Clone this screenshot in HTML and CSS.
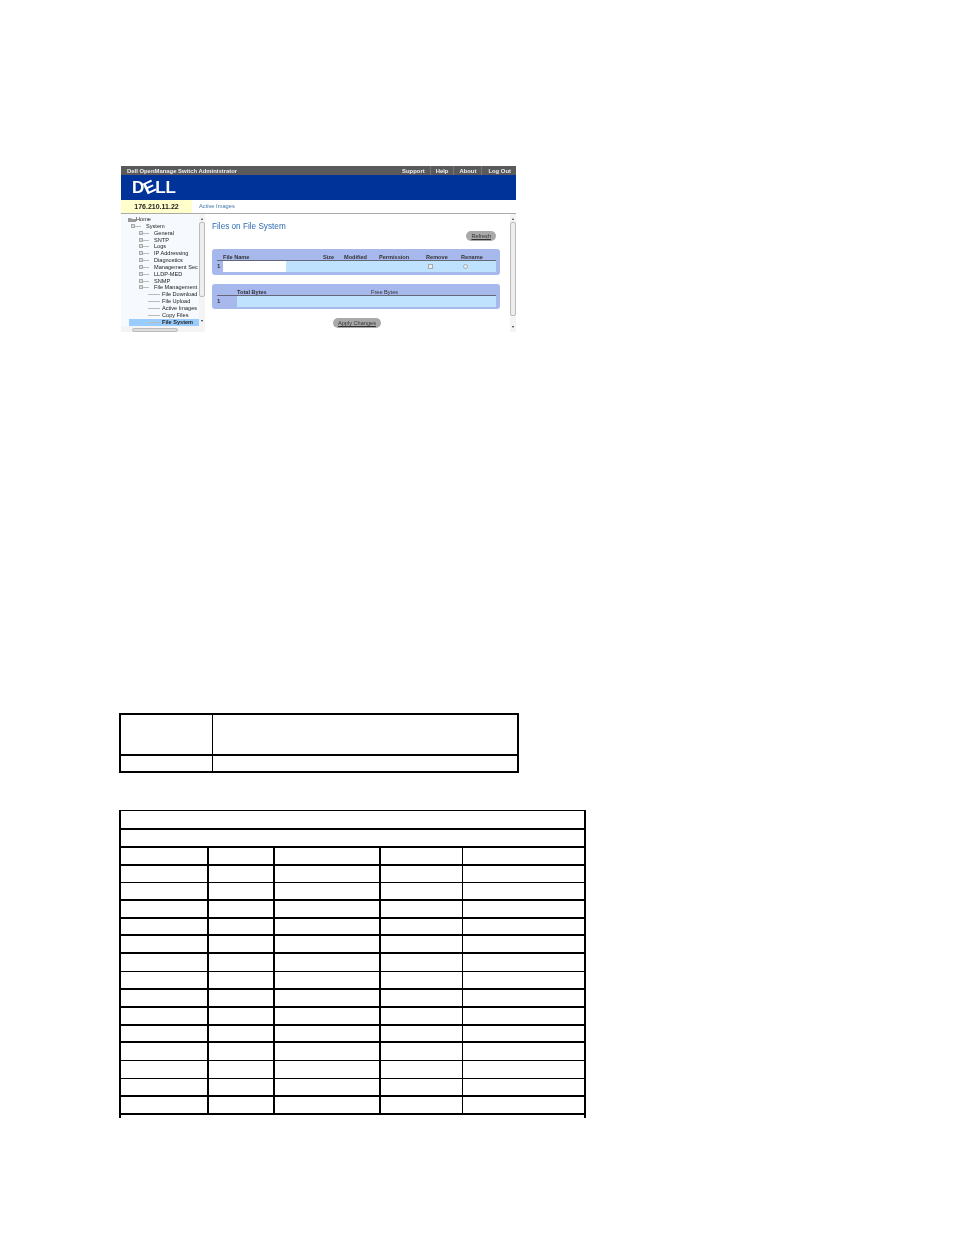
FILE: index.html
```html
<!DOCTYPE html>
<html lang="en">
<head>
    <meta charset="UTF-8">
    <title>Files on File System</title>
    <link rel="stylesheet" href="styles.css">
</head>
<body>
    <div class="shot">
        <div class="topbar">
            <span class="app-name">Dell OpenManage Switch Administrator</span>
            <span class="top-links">
                <span>Support</span>
                <span>Help</span>
                <span>About</span>
                <span>Log Out</span>
            </span>
        </div>
        <div class="brand"><span class="logo">D<span class="logo-e">E</span>LL</span></div>
        <div class="ip-row">
            <div class="ip">176.210.11.22</div>
            <div class="tab">Active Images</div>
        </div>
        <div class="main">
            <div class="side">
                <div class="side-top">
                    <ul class="tree">
                        <li class="lv0">
                            <svg class="home-icon" width="8" height="5" viewBox="0 0 8 5"><path d="M0 1h3l1 1h4v3H0z" fill="#9a9a9a"/></svg>Home
                        </li>
                        <li class="lv1"><i class="box"></i>System</li>
                        <li class="lv2"><i class="box"></i>General</li>
                        <li class="lv2"><i class="box"></i>SNTP</li>
                        <li class="lv2"><i class="box"></i>Logs</li>
                        <li class="lv2"><i class="box"></i>IP Addressing</li>
                        <li class="lv2"><i class="box"></i>Diagnostics</li>
                        <li class="lv2"><i class="box"></i>Management Sec</li>
                        <li class="lv2"><i class="box"></i>LLDP-MED</li>
                        <li class="lv2"><i class="box"></i>SNMP</li>
                        <li class="lv2"><i class="box"></i>File Management</li>
                        <li class="lv3">File Download</li>
                        <li class="lv3">File Upload</li>
                        <li class="lv3">Active Images</li>
                        <li class="lv3">Copy Files</li>
                        <li class="lv3 current">File System</li>
                    </ul>
                    <div class="vscroll side-scroll"><span class="thumb"></span></div>
                </div>
                <div class="hscroll"><span class="hthumb"></span></div>
            </div>
            <div class="content">
                <div class="content-body">
                    <h1>Files on File System</h1>
                    <div class="actions"><span class="pill">Refresh</span></div>
                    <div class="panel">
                        <div class="files-grid head">
                            <span></span>
                            <span>File Name</span>
                            <span>Size</span>
                            <span>Modified</span>
                            <span>Permission</span>
                            <span>Remove</span>
                            <span>Rename</span>
                        </div>
                        <div class="files-grid row">
                            <span class="num">1</span>
                            <span class="name-cell"></span>
                            <span></span>
                            <span></span>
                            <span></span>
                            <span><i class="check"></i></span>
                            <span><i class="radio"></i></span>
                        </div>
                    </div>
                    <div class="panel">
                        <div class="bytes-grid head">
                            <span></span>
                            <span>Total Bytes</span>
                            <span class="free">Free Bytes</span>
                        </div>
                        <div class="bytes-grid row">
                            <span class="num">1</span>
                            <span></span>
                            <span></span>
                        </div>
                    </div>
                    <div class="apply"><span class="pill">Apply Changes</span></div>
                </div>
                <div class="vscroll main-scroll"><span class="thumb"></span></div>
            </div>
        </div>
    </div>

    <table class="desc">
        <tr class="desc-head"><td class="c-a"></td><td></td></tr>
        <tr class="desc-row"><td class="c-a"></td><td></td></tr>
    </table>

    <div class="spec-wrap">
        <table class="spec">
            <colgroup>
                <col class="w1">
                <col class="w2">
                <col class="w3">
                <col class="w4">
                <col>
            </colgroup>
            <tr class="first"><td colspan="5"></td></tr>
            <tr><td colspan="5"></td></tr>
            <tr><td></td><td></td><td></td><td class="thin-r"></td><td></td></tr>
            <tr class="short thin"><td></td><td></td><td></td><td class="thin-r"></td><td></td></tr>
            <tr><td></td><td></td><td></td><td class="thin-r"></td><td></td></tr>
            <tr><td></td><td></td><td></td><td class="thin-r"></td><td></td></tr>
            <tr class="short"><td></td><td></td><td></td><td class="thin-r"></td><td></td></tr>
            <tr><td></td><td></td><td></td><td class="thin-r"></td><td></td></tr>
            <tr class="thin"><td></td><td></td><td></td><td class="thin-r"></td><td></td></tr>
            <tr><td></td><td></td><td></td><td class="thin-r"></td><td></td></tr>
            <tr><td></td><td></td><td></td><td class="thin-r"></td><td></td></tr>
            <tr><td></td><td></td><td></td><td class="thin-r"></td><td></td></tr>
            <tr class="short"><td></td><td></td><td></td><td class="thin-r"></td><td></td></tr>
            <tr class="thin"><td></td><td></td><td></td><td class="thin-r"></td><td></td></tr>
            <tr class="thin"><td></td><td></td><td></td><td class="thin-r"></td><td></td></tr>
            <tr><td></td><td></td><td></td><td class="thin-r"></td><td></td></tr>
            <tr><td></td><td></td><td></td><td class="thin-r"></td><td></td></tr>
        </table>
    </div>
</body>
</html>
```

FILE: styles.css
```css
body {
    margin: 0;
    padding: 166px 0 0 119px;
    background-color: #fff;
    font-family: "Liberation Sans", Arial, sans-serif;
}

/* screenshot of the switch admin page */
.shot {
    width: 395px;
    height: 166px;
    margin-left: 2px;
    overflow: hidden;
    filter: blur(0.4px);
}

.topbar {
    height: 9px;
    background-color: #5a5a5a;
    color: #eee;
    font-size: 5.9px;
    font-weight: bold;
    line-height: 10px;
    display: flex;
    justify-content: space-between;
    padding: 0 5px 0 6px;
}

.top-links {
    display: flex;
    gap: 5px;
}

.top-links span + span {
    padding-left: 5px;
    border-left: 1px solid #777;
}

.top-links span:last-child {
    padding-left: 6px;
}

.brand {
    height: 25px;
    background-color: #003399;
    padding-left: 11px;
}

.logo {
    color: #fff;
    font-size: 17px;
    font-weight: bold;
    line-height: 25px;
    letter-spacing: -0.2px;
}

.logo-e {
    display: inline-block;
    transform: rotate(-25deg);
}

.ip-row {
    height: 14px;
    display: flex;
    border-bottom: 1px solid #aaa;
    box-sizing: border-box;
}

.ip {
    width: 71px;
    background-color: #ffffcc;
    font-size: 7px;
    font-weight: bold;
    color: #222;
    text-align: center;
    line-height: 13px;
}

.tab {
    padding-left: 7px;
    font-size: 5.7px;
    color: #4477aa;
    line-height: 13px;
}

.main {
    display: flex;
    height: 118px;
}

.side {
    width: 84px;
    display: flex;
    flex-direction: column;
    background-color: #f6f9fd;
}

.side-top {
    display: flex;
    flex: 1;
}

.tree {
    list-style: none;
    margin: 0;
    padding: 2px 0 0;
    flex: 1;
    font-size: 5.6px;
    color: #222;
}

.tree li {
    height: 6.85px;
    line-height: 6.85px;
    white-space: nowrap;
    position: relative;
}

.lv0 { padding-left: 15px; }
.lv1 { padding-left: 25px; }
.lv2 { padding-left: 33px; }
.lv3 { padding-left: 41px; }

.home-icon {
    position: absolute;
    left: 7px;
    top: 1px;
}

.box {
    position: absolute;
    top: 1px;
    width: 4px;
    height: 4px;
    border: 1px solid #aaa;
    box-sizing: border-box;
    background-color: #ddd;
}

.lv1 .box { left: 10px; }
.lv2 .box { left: 18px; }

.box::after {
    content: "";
    position: absolute;
    left: 3px;
    top: 1px;
    width: 6px;
    height: 1px;
    background-color: #bbb;
}

.lv3::before {
    content: "";
    position: absolute;
    left: 27px;
    top: 3px;
    width: 12px;
    height: 1px;
    background-color: #bbb;
}

.current {
    background-color: #99ccff;
    margin-left: 8px;
    padding-left: 33px;
    font-weight: bold;
}

.current::before {
    left: 19px;
}

.vscroll {
    position: relative;
    width: 6px;
    background-color: #f4f4f4;
    padding-top: 8px;
    box-sizing: border-box;
}

/* scrollbar arrows */
.vscroll::before,
.vscroll::after {
    content: "";
    position: absolute;
    left: 2px;
    border-left: 1px solid transparent;
    border-right: 1px solid transparent;
}

.vscroll::before {
    top: 4px;
    border-bottom: 2px solid #333;
}

.vscroll::after {
    bottom: 4px;
    border-top: 2px solid #333;
}

.thumb {
    display: block;
    border: 1px solid #bbb;
    border-radius: 2px;
    box-sizing: border-box;
    background-color: #eee;
}

.side-scroll .thumb {
    height: 75px;
}

.main-scroll .thumb {
    height: 94px;
}

.hscroll {
    height: 6px;
    background-color: #f4f4f4;
    padding: 2px 7px 0 11px;
    box-sizing: border-box;
}

.hthumb {
    display: block;
    width: 46px;
    height: 4px;
    background-color: #ddd;
    border: 1px solid #bbb;
    border-radius: 2px;
    box-sizing: border-box;
}

.content {
    flex: 1;
    display: flex;
    background-color: #fff;
}

.content-body {
    flex: 1;
    padding-left: 7px;
}

h1 {
    margin: 8px 0 0;
    font-size: 8.2px;
    font-weight: normal;
    line-height: 9px;
    color: #2f6db5;
}

.actions {
    display: flex;
    justify-content: flex-end;
    padding-right: 14px;
    margin: 0 0 8px;
}

.pill {
    display: block;
    padding: 0 5px;
    height: 10px;
    line-height: 10px;
    border-radius: 5px;
    background-color: #a9a9a9;
    font-size: 5.6px;
    color: #333;
    text-decoration: underline;
}

.panel {
    width: 288px;
    height: 26px;
    box-sizing: border-box;
    padding: 5px 4px 3px 5px;
    margin-bottom: 9px;
    background-color: #a7b8ec;
    border-radius: 3px;
}

.panel + .panel {
    height: 25px;
}

.files-grid {
    display: grid;
    grid-template-columns: 6px 100px 21px 35px 47px 35px 35px;
}

.bytes-grid {
    display: grid;
    grid-template-columns: 20px 134px 125px;
}

.head {
    height: 6px;
    font-size: 5.6px;
    font-weight: bold;
    line-height: 6px;
    color: #333;
    border-bottom: 1px solid #667;
    white-space: nowrap;
}

.row {
    height: 11px;
    background-color: #bfe2ff;
    font-size: 6px;
    line-height: 11px;
}

.num {
    background-color: #a7b8ec;
    font-weight: bold;
    color: #333;
}

.free {
    font-weight: normal;
}

.name-cell {
    background-color: #fff;
    width: 63px;
}

.check,
.radio {
    display: block;
    width: 5px;
    height: 5px;
    margin: 3px 0 0 2px;
    background-color: #e8eef4;
    border: 1px solid #aaa;
    box-sizing: border-box;
}

.radio {
    border-radius: 50%;
}

.apply {
    display: flex;
    justify-content: center;
    width: 290px;
}

.main-scroll {
    height: 118px;
}

/* empty tables under the screenshot */
table {
    border-collapse: separate;
    border-spacing: 0;
    table-layout: fixed;
}

td {
    padding: 0;
    box-sizing: border-box;
    border-right: 2px solid #000;
    border-bottom: 2px solid #000;
}

.desc {
    width: 400px;
    margin-top: 381px;
    border-top: 2px solid #000;
    border-left: 2px solid #000;
}

.c-a {
    width: 92px;
    border-right-width: 1px;
}

.desc-head td {
    height: 41px;
}

.desc-row td {
    height: 17px;
}

.spec-wrap {
    width: 467px;
    height: 308px;
    margin-top: 37px;
    box-sizing: border-box;
    border-top: 1px solid #000;
    border-left: 2px solid #000;
    border-right: 2px solid #000;
    overflow: hidden;
}

.spec {
    width: 463px;
}

.spec td {
    height: 18px;
}

.spec td:last-child {
    border-right: 0;
}

.spec .first td {
    height: 19px;
}

.spec .short td {
    height: 17px;
}

.spec .thin td {
    border-bottom-width: 1px;
}

.w1 { width: 88px; }
.w2 { width: 66px; }
.w3 { width: 106px; }
.w4 { width: 82px; }
.thin-r { border-right-width: 1px; }
```
